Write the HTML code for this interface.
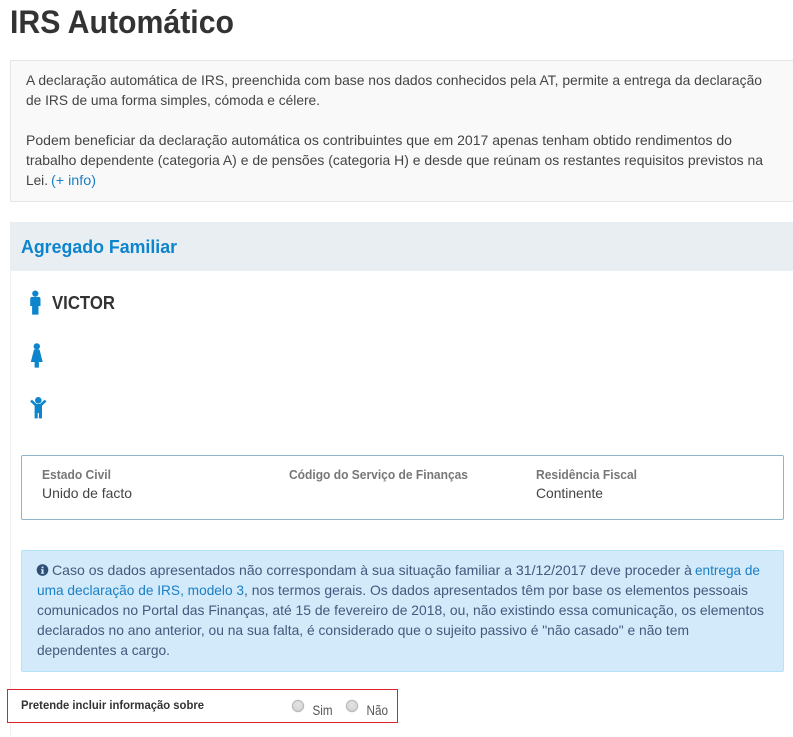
<!DOCTYPE html>
<html lang="pt"><head><meta charset="utf-8"><title>IRS Automático</title>
<style>
html,body{margin:0;padding:0;background:#fff;width:793px;height:737px;overflow:hidden}
svg{display:block;font-family:"Liberation Sans",sans-serif}
.t{font-size:14px;fill:#444}
.a{font-size:14px;fill:#44597c}
.l{fill:#1b7fc4}
.h{font-size:13px;font-weight:bold;fill:#777}
.v{font-size:14px;fill:#444}
</style></head><body>
<svg width="793" height="737" viewBox="0 0 793 737" xmlns="http://www.w3.org/2000/svg">
<defs><radialGradient id="r" cx="50%" cy="40%" r="60%"><stop offset="0" stop-color="#e4e4e4"/><stop offset="0.7" stop-color="#d8d8d8"/><stop offset="1" stop-color="#c4c4c4"/></radialGradient></defs>
<rect width="793" height="737" fill="#fff"/>
<text x="10" y="33" font-size="32.5" font-weight="bold" fill="#333" textLength="224" lengthAdjust="spacingAndGlyphs">IRS Automático</text>

<rect x="10.5" y="60.5" width="790" height="141" fill="#f9f9f9" stroke="#e6e6e6"/>
<text class="t" x="26" y="85" textLength="736" lengthAdjust="spacingAndGlyphs">A declaração automática de IRS, preenchida com base nos dados conhecidos pela AT, permite a entrega da declaração</text>
<text class="t" x="26" y="105" textLength="294" lengthAdjust="spacingAndGlyphs">de IRS de uma forma simples, cómoda e célere.</text>
<text class="t" x="26" y="145" textLength="706" lengthAdjust="spacingAndGlyphs">Podem beneficiar da declaração automática os contribuintes que em 2017 apenas tenham obtido rendimentos do</text>
<text class="t" x="26" y="165" textLength="737" lengthAdjust="spacingAndGlyphs">trabalho dependente (categoria A) e de pensões (categoria H) e desde que reúnam os restantes requisitos previstos na</text>
<text class="t" x="26" y="185" textLength="22" lengthAdjust="spacingAndGlyphs">Lei.</text>
<text class="t l" x="51" y="185" textLength="45" lengthAdjust="spacingAndGlyphs">(+ info)</text>

<rect x="10" y="271" width="1" height="466" fill="#eef0f2"/>
<rect x="10" y="222" width="783" height="49" fill="#e9eef3"/>
<text x="21" y="253" font-size="18" font-weight="bold" fill="#0c85cc" textLength="156" lengthAdjust="spacingAndGlyphs">Agregado Familiar</text>

<g fill="#0c85cc">
<circle cx="35.3" cy="293.6" r="3.1"/>
<path d="M32.4 296.9h5.8q2.3 0 2.3 2.2V306h-2v8.6h-6.4V306h-1.9v-6.9q0-2.2 2.2-2.2z"/>
<circle cx="36.8" cy="346.4" r="3.2"/>
<path d="M34 349.5h5.5l3.2 12.5h-3.8v5.6h-4.3V362h-3.8z"/>
<circle cx="38.3" cy="400.3" r="3.3"/>
<path d="M34.6 404h7.4v14.4h-3.1v-5.4h-1.2v5.4h-3.1z"/>
<path d="M31 400.6l4.6 4.2M45.6 400.6l-4.6 4.2" fill="none" stroke="#0c85cc" stroke-width="2.6"/>
</g>
<text x="52" y="309" font-size="18" font-weight="bold" fill="#333" textLength="63" lengthAdjust="spacingAndGlyphs">VICTOR</text>

<rect x="21.5" y="455.5" width="762" height="64" rx="1.5" fill="#fff" stroke="#8fb5c9"/>
<text class="h" x="42" y="479" textLength="69" lengthAdjust="spacingAndGlyphs">Estado Civil</text>
<text class="v" x="42" y="498" textLength="90" lengthAdjust="spacingAndGlyphs">Unido de facto</text>
<text class="h" x="289" y="479" textLength="179" lengthAdjust="spacingAndGlyphs">Código do Serviço de Finanças</text>
<text class="h" x="536" y="479" textLength="101" lengthAdjust="spacingAndGlyphs">Residência Fiscal</text>
<text class="v" x="536" y="498" textLength="67" lengthAdjust="spacingAndGlyphs">Continente</text>

<rect x="21.5" y="550.5" width="762" height="121" rx="1.5" fill="#d2eafa" stroke="#b6e3f8"/>
<circle cx="42.5" cy="570" r="5.8" fill="#2f4d75"/>
<rect x="41.6" y="566.6" width="1.9" height="1.7" fill="#d2eafa"/>
<path d="M41 569.2h2.5v3.6h.6v.9h-3.2v-.9h.7v-2.7H41z" fill="#d2eafa"/>
<text class="a" x="52" y="575" textLength="640" lengthAdjust="spacingAndGlyphs">Caso os dados apresentados não correspondam à sua situação familiar a 31/12/2017 deve proceder à</text>
<text class="a l" x="695" y="575" textLength="65" lengthAdjust="spacingAndGlyphs">entrega de</text>
<text class="a l" x="37" y="595" textLength="207" lengthAdjust="spacingAndGlyphs">uma declaração de IRS, modelo 3</text>
<text class="a" x="244" y="595" textLength="504" lengthAdjust="spacingAndGlyphs">, nos termos gerais. Os dados apresentados têm por base os elementos pessoais</text>
<text class="a" x="37" y="615" textLength="727" lengthAdjust="spacingAndGlyphs">comunicados no Portal das Finanças, até 15 de fevereiro de 2018, ou, não existindo essa comunicação, os elementos</text>
<text class="a" x="37" y="635" textLength="652" lengthAdjust="spacingAndGlyphs">declarados no ano anterior, ou na sua falta, é considerado que o sujeito passivo é "não casado" e não tem</text>
<text class="a" x="37" y="655" textLength="133" lengthAdjust="spacingAndGlyphs">dependentes a cargo.</text>

<rect x="7.5" y="689.5" width="390" height="33" fill="#fff" stroke="#e0202c"/>
<text x="21" y="709" font-size="12" font-weight="bold" fill="#333" textLength="183" lengthAdjust="spacingAndGlyphs">Pretende incluir informação sobre</text>
<circle cx="298" cy="706" r="5.7" fill="url(#r)" stroke="#b8b8b8"/>
<circle cx="352" cy="706" r="5.7" fill="url(#r)" stroke="#b8b8b8"/>
<text x="312.5" y="715" font-size="13.5" fill="#555" textLength="20" lengthAdjust="spacingAndGlyphs">Sim</text>
<text x="366.5" y="715" font-size="13.5" fill="#555" textLength="21.5" lengthAdjust="spacingAndGlyphs">Não</text>
</svg>
</body></html>
